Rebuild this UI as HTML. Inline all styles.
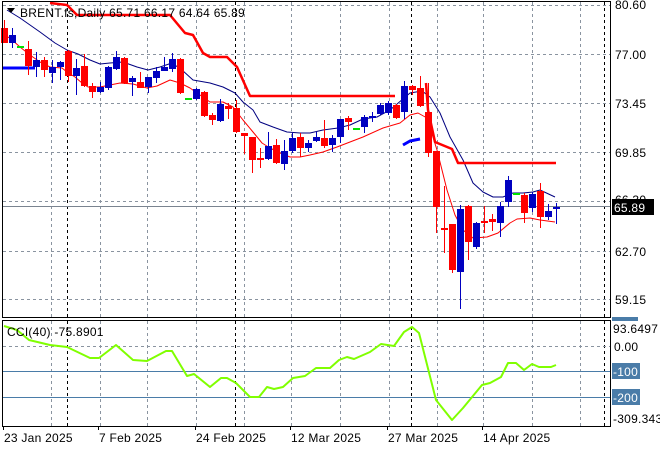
<!DOCTYPE html>
<html><head><meta charset="utf-8"><style>
html,body{margin:0;padding:0;background:#fff;width:660px;height:450px;overflow:hidden}
svg{display:block;font-family:"Liberation Sans",sans-serif;font-size:12px;letter-spacing:0.25px}
</style></head><body>
<svg id="s" width="660" height="450" viewBox="0 0 660 450" xmlns="http://www.w3.org/2000/svg">
<g id="grid"></g>
<g id="lines"></g>
<g id="candles"></g>
<g id="over"></g>
</svg>
<script>
var NS="http://www.w3.org/2000/svg";
function el(p,t,a,txt){var e=document.createElementNS(NS,t);for(var k in a)e.setAttribute(k,a[k]);if(txt!==undefined)e.textContent=txt;document.getElementById(p).appendChild(e);return e;}
var gx=[51,100,147,196,244,291,340,389,437,483,532,580];
gx.forEach(function(x){el('grid','line',{x1:x+.5,y1:2,x2:x+.5,y2:317,stroke:'#8a94a0','stroke-dasharray':'3,3'});el('grid','line',{x1:x+.5,y1:321,x2:x+.5,y2:426,stroke:'#8a94a0','stroke-dasharray':'3,3'});});
[5,54,103,152,201,251,299].forEach(function(y){el('grid','line',{x1:3,y1:y+.5,x2:610,y2:y+.5,stroke:'#8a94a0','stroke-dasharray':'3,3'});});
[67,235,411,604].forEach(function(x){el('grid','line',{x1:x+.5,y1:2,x2:x+.5,y2:317,stroke:'#000','stroke-dasharray':'3,3'});el('grid','line',{x1:x+.5,y1:321,x2:x+.5,y2:426,stroke:'#000','stroke-dasharray':'3,3'});});
el('grid','line',{x1:3,y1:346.5,x2:610,y2:346.5,stroke:'#8a94a0','stroke-dasharray':'3,3'});
el('grid','line',{x1:3,y1:371.5,x2:610,y2:371.5,stroke:'#4a7ca8'});
el('grid','line',{x1:3,y1:397.5,x2:610,y2:397.5,stroke:'#4a7ca8'});
el('grid','line',{x1:3,y1:206.5,x2:610,y2:206.5,stroke:'#7a8490'});
function pl(pts,c,w){el('lines','polyline',{points:pts,fill:'none',stroke:c,'stroke-width':w,'stroke-linejoin':'round'});}
pl("7,10 20,18 40,32 55,43 67,50 78,54 90,60 100,64 110,63 123,62 137,67 148,70 160,67 172,63 182,70 193,80 210,83 223,87 235,93 243,102 253,110 260,122 273,127 287,132 300,133 310,133 323,130 338,128 350,125 363,119 377,117 390,110 410,93 422,91 430,97 440,113 450,137 463,160 473,183 483,192 493,197 503,197 513,193 523,193 533,192 540,190 555,197",'#000080',1);
pl("3,35 10,38 20,47 30,55 40,62 50,67 62,68 67,72 75,77 82,83 88,87 100,87 110,85 120,83 133,84 147,88 157,86 170,80 180,83 190,88 200,95 210,102 223,102 233,107 243,120 253,132 262,143 270,148 280,153 290,157 300,157 310,155 323,152 337,147 350,142 363,137 383,128 400,123 410,115 418,113 427,118 437,150 447,190 455,215 463,230 473,238 487,237 498,233 510,223 517,219 530,218 540,220 555,222",'#ff0000',1);
pl("50,3 67,5 77,15 170,15 185,33 193,35 203,53 210,57 227,57 237,67 250,96 395,96",'#ff0000',2.5);
pl("426,83 428,110 435,142 452,149 458,163 556,163",'#ff0000',2.5);
pl("2,68 35,68",'#0000ff',3);
pl("403,145 410,141 420,139",'#0000ff',3);
var C=[
[0,28,43,20,43,'r'],[1,35,43,28,48,'b'],[2,46,46,46,46,'g'],[3,49,66,41,75,'r'],[4,60,67,52,77,'b'],[5,60,70,57,77,'r'],[6,67,73,60,83,'b'],[7,62,67,61,80,'b'],[8,51,76,50,82,'r'],[9,68,76,59,95,'b'],
[10,66,86,54,87,'r'],[11,86,92,83,98,'r'],[12,87,92,82,93,'b'],[13,67,88,66,90,'b'],[14,57,69,51,70,'b'],[15,58,83,57,84,'r'],[16,78,82,76,96,'b'],[17,82,88,72,88,'r'],[18,77,87,77,93,'b'],[19,71,78,67,83,'b'],
[20,67,71,57,71,'b'],[21,59,69,53,72,'b'],[22,59,93,58,94,'r'],[23,98,98,98,98,'g'],[24,89,99,88,100,'b'],[25,92,116,91,117,'r'],[26,115,120,113,125,'r'],[27,104,121,99,122,'b'],[28,106,109,103,119,'r'],[29,108,132,100,133,'r'],
[30,133,136,133,154,'r'],[31,137,160,137,173,'r'],[32,158,159,148,168,'r'],[33,146,159,132,160,'b'],[34,145,163,139,164,'r'],[35,151,164,140,170,'b'],[36,138,151,133,153,'b'],[37,137,148,133,157,'r'],[38,143,148,140,152,'b'],[39,137,141,132,142,'b'],
[40,138,146,120,148,'r'],[41,138,145,135,152,'b'],[42,119,137,119,143,'b'],[43,118,122,116,130,'r'],[44,128,128,128,128,'g'],[45,117,127,115,133,'b'],[46,116,118,112,122,'b'],[47,105,114,103,115,'b'],[48,103,113,101,115,'b'],[49,105,118,104,119,'r'],
[50,86,112,81,119,'b'],[51,86,90,85,95,'r'],[52,88,106,76,107,'r'],[53,112,153,83,157,'r'],[54,151,207,151,233,'r'],[55,228,230,186,253,'r'],[56,224,270,224,273,'r'],[57,209,272,205,309,'b'],[58,206,242,205,260,'r'],[59,223,247,222,249,'b'],
[60,221,222,206,233,'r'],[61,219,222,214,231,'r'],[62,206,223,202,237,'b'],[63,180,202,176,207,'b'],[64,193,193,193,193,'g'],[65,195,213,193,223,'r'],[66,194,208,192,212,'b'],[67,191,217,183,228,'r'],[68,211,217,204,220,'b'],[69,207,209,203,224,'b']];
C.forEach(function(c){var x=Math.round(3.7+8*c[0]);var col=c[5]=='r'?'#ff0000':(c[5]=='b'?'#0000c0':'#00e000');
 if(c[5]=='g'){el('candles','rect',{x:x-3,y:c[1],width:7,height:2,fill:col});return;}
 el('candles','rect',{x:x,y:c[3],width:1,height:c[4]-c[3],fill:col});
 var t=Math.min(c[1],c[2]),b=Math.max(c[1],c[2]);el('candles','rect',{x:x-3,y:t,width:7,height:Math.max(2,b-t),fill:col});});
pl("4,326 17,330 29,340 50,345 67,347 90,358 99,358 116,345 133,360 147,361 166,351 172,351 187,376 194,374 210,387 221,378 227,378 236,383 250,397 259,397 267,387 274,389 283,387 293,378 305,376 316,368 330,368 339,360 347,357 354,359 370,352 381,344 394,346 404,332 412,327 419,333 436,400 452,420 463,408 482,385 490,383 501,377 508,363 516,363 524,370 532,364 539,367 551,367 556,365",'#80ff00',2);
el('over','rect',{x:2.5,y:1.5,width:608,height:316,fill:'none',stroke:'#000'});
el('over','rect',{x:2.5,y:320.5,width:608,height:106,fill:'none',stroke:'#000'});
el('over','path',{d:'M7 8 L15 8 L11 13 Z',fill:'#000'});
el('over','text',{x:20,y:17,fill:'#000'},'BRENT.fs,Daily  65.71 66.17 64.64 65.89');
el('over','text',{x:7,y:336,fill:'#000'},'CCI(40) -75.8901');
[[80.60,9],[77.00,59],[73.45,108],[69.85,157],[66.30,204],[62.70,256],[59.15,304]].forEach(function(l){el('over','text',{x:615,y:l[1],fill:'#000'},l[0].toFixed(2));});
el('over','rect',{x:612,y:199,width:42,height:16,fill:'#000'});
el('over','text',{x:614,y:212,fill:'#fff'},'65.89');
el('over','rect',{x:612,y:317,width:26,height:4,fill:'#4a7ca8'});
el('over','text',{x:613,y:333,fill:'#000'},'93.6497');
el('over','text',{x:614,y:351,fill:'#000'},'0.00');
el('over','rect',{x:612,y:363,width:28,height:16,fill:'#4a7ca8'});
el('over','text',{x:613,y:376,fill:'#fff'},'-100');
el('over','rect',{x:612,y:389,width:28,height:16,fill:'#4a7ca8'});
el('over','text',{x:613,y:402,fill:'#fff'},'-200');
el('over','text',{x:613,y:423,fill:'#000'},'-309.343');
[[3,'23 Jan 2025'],[98,'7 Feb 2025'],[195,'24 Feb 2025'],[290,'12 Mar 2025'],[387,'27 Mar 2025'],[482,'14 Apr 2025']].forEach(function(d){el('over','line',{x1:d[0]+.5,y1:426,x2:d[0]+.5,y2:430,stroke:'#000'});el('over','text',{x:d[0]+1,y:442,fill:'#000'},d[1]);});
</script>
</body></html>
